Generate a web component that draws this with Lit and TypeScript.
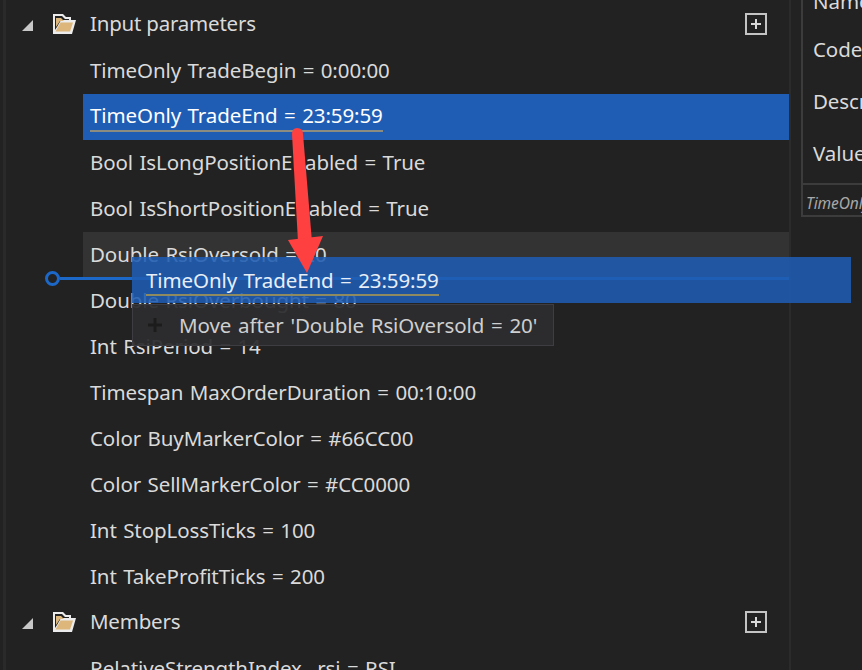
import { LitElement, html, css, svg } from "lit";
import { customElement } from "lit/decorators.js";

const folder = svg`<svg class="folder" width="24" height="22" viewBox="0 0 24 22">
  <path d="M1 1h10l3 3h5v3h5l-4 14H1z" fill="#ececec"/>
  <path d="M3 3h7l3 3h4v1H9l-4 7-2 3z" fill="#232323"/>
  <path d="M3.500 18.500l5-9h12.500l-3 9z" fill="#dcb67a"/>
  <path d="M4 5h5l3 3H8l-4 6z" fill="#dcb67a"/>
</svg>`;

const plusBox = html`<svg class="plus-box" width="22" height="22" viewBox="0 0 22 22">
  <rect x="1" y="1" width="20" height="20" fill="none" stroke="#c4c4c4" stroke-width="2"/>
  <path d="M6 11h10M11 6v10" stroke="#d8d8d8" stroke-width="2" fill="none"/>
</svg>`;

const tri = html`<svg class="tri" width="12" height="11" viewBox="0 0 12 11"><path d="M11 0v11H0z" fill="#c8c8c8"/></svg>`;

const params = [
  "TimeOnly TradeBegin = 0:00:00",
  "TimeOnly TradeEnd = 23:59:59",
  "Bool IsLongPositionEnabled = True",
  "Bool IsShortPositionEnabled = True",
  "Double RsiOversold = 20",
  "Double RsiOverbought = 80",
  "Int RsiPeriod = 14",
  "Timespan MaxOrderDuration = 00:10:00",
  "Color BuyMarkerColor = #66CC00",
  "Color SellMarkerColor = #CC0000",
  "Int StopLossTicks = 100",
  "Int TakeProfitTicks = 200",
];

@customElement("app-root")
export class AppRoot extends LitElement {
  static styles = css`
    :host {
      display: block;
      position: relative;
      width: 862px;
      height: 670px;
      overflow: hidden;
      background: #222222;
      color: #dadada;
      font-family: "Noto Sans", "Open Sans", sans-serif;
      font-size: 20.5px;
      letter-spacing: -0.09px;
      word-spacing: 1.2px;
    }
    .layout { display: flex; height: 670px; }
    .edge { width: 3px; margin-left: 3px; background: #2a2a2a; flex: none; }
    .tree {
      width: 785px;
      flex: none;
      padding-top: 2px;
      box-sizing: border-box;
      border-right: 2px solid #2b2b2b;
      margin-right: 10px;
    }
    .row {
      height: 46px;
      box-sizing: border-box;
      padding-bottom: 3px;
      display: flex;
      align-items: center;
      white-space: nowrap;
    }
    .group { position: relative; }
    .tri { margin-left: 16px; margin-top: 3px; flex: none; }
    .folder { margin-left: 18px; margin-top: 1px; flex: none; }
    .group .label {
      margin-left: 14px;
      margin-bottom: 2px;
      letter-spacing: -0.22px;
      word-spacing: 0;
    }
    .plus-box { margin-left: auto; margin-right: 22px; flex: none; }
    .item {
      margin-left: 77px;
      padding-left: 7px;
    }
    .item.selected { background: #1f5db5; color: #ffffff; }
    .item.hover { background: #333333; }
    .uline { border-bottom: 2px solid #8c8c80; line-height: 29px; margin-top: 1px; }

    .panel {
      flex: none;
      width: 100px;
      height: 217px;
      box-sizing: border-box;
      border-left: 2px solid #3c3c3c;
      border-bottom: 2px solid #3c3c3c;
      display: flex;
      flex-direction: column;
      overflow: hidden;
      white-space: nowrap;
    }
    .fields {
      flex: none;
      height: 185px;
      box-sizing: border-box;
      padding-left: 10px;
      padding-bottom: 4px;
      display: flex;
      flex-direction: column;
      justify-content: flex-end;
      border-bottom: 2px solid #3c3c3c;
    }
    .field { height: 52px; flex: none; line-height: 52px; }
    .field.first { height: 22px; line-height: 0; }
    .hint {
      font-style: italic;
      font-size: 15.5px;
      color: #a8a8a8;
      padding-left: 3px;
      line-height: 36px;
    }

    .insert {
      position: absolute;
      left: 45px;
      top: 271px;
      width: 744px;
      height: 14px;
      display: flex;
      align-items: center;
    }
    .dot {
      width: 9px;
      height: 9px;
      border: 3px solid #1c68c8;
      border-radius: 50%;
      flex: none;
    }
    .insert-line { flex: 1; height: 3px; background: #1c68c8; }
    .ghost {
      position: absolute;
      left: 132px;
      top: 257px;
      width: 719px;
      height: 46px;
      box-sizing: border-box;
      padding-left: 14px;
      display: flex;
      align-items: center;
      background: rgba(31, 92, 178, 0.88);
      color: #e8eef7;
      white-space: nowrap;
    }
    .ghost .uline { border-bottom-color: #8f8a60; line-height: 27px; margin-top: 2px; }
    .tip {
      position: absolute;
      left: 132px;
      top: 304px;
      width: 422px;
      height: 42px;
      box-sizing: border-box;
      display: flex;
      align-items: center;
      background: rgba(45, 45, 47, 0.94);
      border: 1px solid #3e3e42;
      color: #cfcfcf;
      white-space: nowrap;
      word-spacing: 1.6px;
    }
    .tip svg { margin-left: 14px; margin-right: 16px; flex: none; }
    .arrow { position: absolute; left: 0; top: 0; pointer-events: none; }
  `;

  render() {
    return html`
      <div class="layout">
        <div class="edge"></div>
        <div class="tree">
          <div class="row group">${tri}${folder}<span class="label">Input parameters</span>${plusBox}</div>
          ${params.map((p, i) =>
            html`<div class="row item ${i === 1 ? "selected" : i === 4 ? "hover" : ""}">
              ${i === 1 ? html`<span class="uline">${p}</span>` : p}
            </div>`
          )}
          <div class="row group">${tri}${folder}<span class="label">Members</span>${plusBox}</div>
          <div class="row item">RelativeStrengthIndex _rsi = RSI</div>
        </div>
        <div class="panel">
          <div class="fields">
            <div class="field first">Name</div>
            <div class="field">Code</div>
            <div class="field">Description</div>
            <div class="field">Value</div>
          </div>
          <div class="hint">TimeOnly</div>
        </div>
      </div>
      <div class="insert"><div class="dot"></div><div class="insert-line"></div></div>
      <div class="ghost"><span class="uline">TimeOnly TradeEnd = 23:59:59</span></div>
      <div class="tip">
        <svg width="16" height="16" viewBox="0 0 16 16"><path d="M1 8h14M8 1v14" stroke="#1c1c1c" stroke-width="3" fill="none"/></svg>
        <span>Move after 'Double RsiOversold = 20'</span>
      </div>
      <svg class="arrow" width="862" height="670" viewBox="0 0 862 670">
        <path d="M292 134Q292 128 297 128Q303 128 303 134L312 242L298 242z" fill="#ff4040"/>
        <path d="M288 240L323 236L307 273z" fill="#ff4040"/>
      </svg>
    `;
  }
}
